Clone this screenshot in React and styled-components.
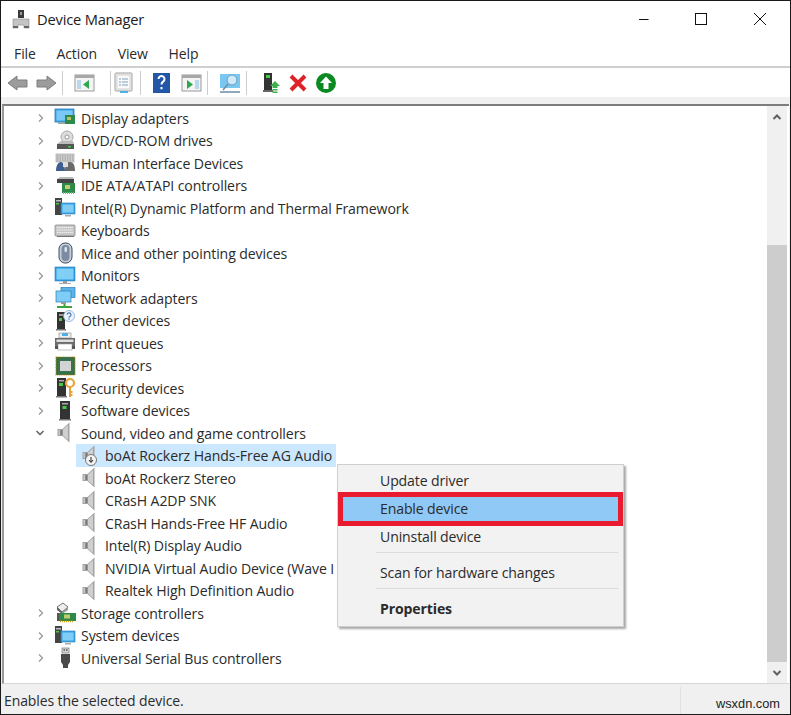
import React from 'react';
import styled, { createGlobalStyle } from 'styled-components';

const Global = createGlobalStyle`
  html, body { margin: 0; padding: 0; background: #1a1a1a; overflow: hidden; }
  * { box-sizing: border-box; }
`;
const Window = styled.div`
  width: 789px; height: 713px; margin: 1px 0 0 1px; background: #f0f0f0;
  display: flex; flex-direction: column; position: relative;
  font-family: "Open Sans", "Noto Sans", sans-serif; color: #222; overflow: hidden;
`;
const TitleBar = styled.div`
  height: 33px; background: #fff; display: flex; align-items: center; padding: 3px 0 0 11px; flex: none;
`;
const TitleText = styled.div`font-size: 14.7px; letter-spacing: -.2px; margin-left: 7px; flex: 1; color: #1c1c1c;`;
const WinBtn = styled.svg`width: 14px; height: 14px; flex: none; margin-right: ${p => p.$mr}px;`;
const MenuBar = styled.div`
  height: 34px; background: #fff; border-bottom: 2px solid #cfcfcf; display: flex; align-items: center;
  padding: 6px 0 0 13px; gap: 20.7px; font-size: 14px; flex: none; color: #2a2a2a;
`;
const MenuItem = styled.div`letter-spacing: -.1px;`;
const Toolbar = styled.div`
  height: 29px; background: #fff; display: flex; align-items: center; padding-left: 6px; flex: none;
`;
const ToolIcon = styled.svg`width: ${p => p.$w}px; height: 22px; flex: none; margin-left: ${p => p.$ml || 0}px;`;
const ToolSep = styled.div`width: 1px; height: 24px; background: #cdcdcd; flex: none; margin-left: ${p => p.$ml}px;`;
const Strip = styled.div`height: 7px; background: #f0f0f0; flex: none;`;
const Panel = styled.div`
  flex: 1; margin-left: 1px; margin-right: 1px; background: #fff; display: flex; min-height: 0;
  border-top: 2px solid #7d7d7d; border-left: 2px solid #9a9a9a; border-bottom: 1px solid #d6d6d6;
`;
const Tree = styled.div`flex: 1; padding-top: .75px; min-width: 0; overflow: hidden;`;
const Row = styled.div`height: 22.5px; display: flex; align-items: center; position: relative;
  padding-left: ${p => p.$child ? 72 : 0}px;`;
const Chevron = styled.svg`width: ${p => p.$w || 8}px; height: 10px; margin-left: ${p => p.$ml || 33}px; flex: none;`;
const DevIcon = styled.svg`width: 22px; height: 22px; flex: none; margin-left: 9px;`;
const RowText = styled.div`font-size: 14.1px; letter-spacing: -.1px; margin-left: 5px; white-space: nowrap; color: #2b2b2b;`;
const ChildCell = styled.div`
  display: flex; align-items: center; height: 23px; padding: 0 4px 0 3px; min-width: 0;
  background: ${p => p.$sel ? '#cce8ff' : 'transparent'};
`;
const ChildIcon = styled.svg`width: 20px; height: 22px; flex: none;`;
const ChildText = styled.div`
  font-size: 14.1px; letter-spacing: -.1px; margin-left: 6px; white-space: nowrap; color: #2b2b2b;
`;
const Scrollbar = styled.div`width: 20px; margin-right: 2px; background: #f0f0f0; display: flex; flex-direction: column; flex: none;`;
const Arrow = styled.div`height: ${p => p.$h}px; display: flex; align-items: center; justify-content: center; flex: none;`;
const Track = styled.div`flex: 1; display: flex; flex-direction: column; justify-content: flex-end;`;
const Thumb = styled.div`height: 417px; background: #cdcdcd;`;
const Status = styled.div`
  height: 30px; background: #f0f0f0; display: flex; align-items: center; flex: none; position: relative;
  font-size: 14px; letter-spacing: -.1px; padding: 3px 0 0 3px; color: #2b2b2b;
`;
const StatusCell = styled.div`width: 677px; height: 100%; display: flex; align-items: center; border-right: 1px solid #e0e0e0;`;
const Watermark = styled.div`
  position: absolute; right: 10px; top: 12px; font-family: "Liberation Sans", sans-serif; font-size: 12.8px; letter-spacing: 0; color: #222;
`;
const ContextMenu = styled.div`
  position: absolute; left: 336px; top: 463px; width: 287px; height: 163px; background: #f2f2f2;
  border: 1px solid #cfcfcf; box-shadow: 2px 2px 2px rgba(0,0,0,.35); display: flex; flex-direction: column;
  padding-top: 3px; font-size: 14.1px; letter-spacing: -.14px; color: #2b2b2b;
`;
const CtxItem = styled.div`
  height: ${p => p.$h}px; display: flex; align-items: center; padding: ${p => p.$pt || 0}px 0 ${p => p.$pb || 0}px 42px;
  font-weight: ${p => p.$bold ? 700 : 400}; flex: none;
`;
const CtxActive = styled.div`
  height: 34px; flex: none; display: flex; align-items: center; padding: 0 0 2px 37px;
  background: #90c8f6; border: 5px solid #e81c2e;
`;
const CtxSep = styled.div`height: 1px; background: #dcdcdc; margin-left: 38px; margin-right: 5px; flex: none;`;

const Chev = () => <Chevron viewBox="0 0 8 10"><path d="M2 1.5 L5.5 5 L2 8.5" fill="none" stroke="#9a9a9a" strokeWidth="1.3"/></Chevron>;
const ChevDown = () => <Chevron $w={10} $ml={31} viewBox="0 0 10 10"><path d="M1.5 3 L5 6.5 L8.5 3" fill="none" stroke="#555" strokeWidth="1.3"/></Chevron>;

const speaker = <>
  <path d="M3.5 7 h5 l7-6.5 v20 l-7-6.5 h-5z" fill="#a2a2a2"/>
  <path d="M9 7.5 l5-4.5 v15 l-5-4.5z" fill="#cfcfcf"/>
  <rect x="4.5" y="8" width="1.5" height="5" fill="#c6c6c6"/>
  <rect x="6.5" y="8" width="1.8" height="5" fill="#7a7a7a"/>
</>;

const icons = {
  display: <><rect x="1" y="2" width="19" height="13" fill="#3aa6e8" stroke="#2279b6" strokeWidth=".8"/><rect x="2.5" y="3.5" width="16" height="10" fill="#7cc8f5"/><rect x="11" y="8" width="10" height="9" fill="#2f8a4a"/><rect x="13" y="10" width="4" height="3" fill="#b9c46c"/><rect x="4" y="15" width="7" height="2" fill="#9aa"/></>,
  dvd: <><ellipse cx="13" cy="7" rx="6" ry="6" fill="#dcdcdc" stroke="#a9a9a9"/><circle cx="13" cy="7" r="2" fill="#fff" stroke="#999"/><path d="M3 14 L7 11 H19 L20 14z" fill="#bbb"/><rect x="3" y="14" width="17" height="5" fill="#555"/><rect x="14" y="16" width="3" height="1.5" fill="#4c4"/></>,
  hid: <><rect x="2" y="2" width="18" height="8" fill="#cfcfcf" stroke="#999" strokeWidth=".6"/><path d="M3 4h16M3 6h16M3 8h16" stroke="#8e8e8e" strokeDasharray="1.5 1" strokeWidth=".8"/><path d="M2 19 C2 12 5 10 7 10 C9 10 11 14 11 19z" fill="#3d5f8f"/><path d="M11 19 C11 12 13 10 16 10 C19 10 21 13 21 19z" fill="#6a6a6a"/><rect x="9" y="11" width="5" height="4" fill="#ddd"/></>,
  ide: <><path d="M3 4 L6 2 H19 L20 4z" fill="#bbb"/><rect x="3" y="4" width="17" height="4" fill="#444"/><rect x="8" y="8" width="13" height="10" fill="#2f8a4a"/><rect x="11" y="10" width="5" height="4" fill="#bfcc70"/><path d="M9 18h11" stroke="#d4a017" strokeWidth="2" strokeDasharray="1 1"/></>,
  system: <><rect x="1" y="1" width="7" height="17" fill="#444"/><rect x="2" y="3" width="5" height="1.5" fill="#bbb"/><rect x="2" y="6" width="3" height="1.5" fill="#4c4"/><rect x="7" y="6" width="14" height="11" fill="#39a3e6" stroke="#2a7fb8" strokeWidth=".6"/><rect x="8.5" y="7.5" width="11" height="8" fill="#7fcdf6"/><rect x="11" y="18" width="6" height="1.5" fill="#aaa"/></>,
  keyboard: <><rect x="1" y="5" width="20" height="11" rx="1" fill="#c8c8c8" stroke="#7b7b7b" strokeWidth=".7"/><path d="M3 7.5h16M3 10h16M3 12.5h16" stroke="#f1f1f1" strokeWidth="1.1" strokeDasharray="1.5 .7"/><rect x="3" y="16" width="17" height="1" fill="#777"/></>,
  mouse: <><rect x="5" y="1" width="13" height="20" rx="6" fill="#c4cedb" stroke="#3e4a5c" strokeWidth="1"/><rect x="7.5" y="3" width="8" height="16" rx="4" fill="#7c8ba0"/><rect x="10.5" y="5" width="2.5" height="5" rx="1" fill="#dce3ea"/></>,
  monitor: <><rect x="1" y="2" width="20" height="14" fill="#2f9be0" stroke="#2a7fb8" strokeWidth=".6"/><rect x="2.5" y="3.5" width="17" height="11" fill="#80cff7"/><rect x="9" y="16" width="4" height="2" fill="#999"/><rect x="5" y="18" width="12" height="1" fill="#aaa"/></>,
  network: <><rect x="7" y="0.5" width="14" height="10" fill="#5ab4ea" stroke="#2a7fb8" strokeWidth=".7"/><rect x="2" y="4" width="15" height="11" fill="#7fcdf6" stroke="#2a7fb8" strokeWidth=".7"/><rect x="7" y="15" width="5" height="2" fill="#999"/><path d="M3 20h15M10.5 17v3" stroke="#3da53d" strokeWidth="2"/></>,
  other: <><rect x="3" y="2" width="8" height="17" fill="#333"/><rect x="5" y="4" width="4" height="2" fill="#999"/><rect x="5" y="8" width="3" height="3" fill="#4c4"/><rect x="2" y="19" width="10" height="1.5" fill="#777"/><circle cx="15" cy="6" r="5.5" fill="#eef4fb" stroke="#88a8cc" strokeWidth=".8"/><path d="M13.2 4.6 a1.9 1.9 0 1 1 2.6 1.9 q-.8 .4 -.8 1.3 M15 8.6 v1.1" fill="none" stroke="#3a6fb0" strokeWidth="1.1"/></>,
  print: <><rect x="5" y="1" width="12" height="5" fill="#eee" stroke="#888" strokeWidth=".6"/><rect x="8" y="1" width="6" height="3" fill="#4fb0e5"/><rect x="1" y="6" width="20" height="8" fill="#6a6a6a"/><rect x="2.5" y="7.5" width="17" height="2.5" fill="#dfdfdf"/><rect x="4" y="12" width="14" height="6" fill="#fff" stroke="#999" strokeWidth=".6"/><rect x="1" y="14" width="3" height="3" fill="#555"/><rect x="18" y="14" width="3" height="3" fill="#555"/></>,
  cpu: <><rect x="2" y="2" width="19" height="18" fill="#2f6b45" stroke="#b38a1a" strokeWidth="1.2" strokeDasharray="1 .8"/><rect x="3.5" y="3.5" width="16" height="15" fill="#39724e"/><rect x="6" y="6" width="11" height="10" fill="#d3d3d3"/></>,
  security: <><rect x="3" y="1" width="9" height="18" fill="#333"/><rect x="5" y="3" width="5" height="1.5" fill="#aaa"/><rect x="5" y="6" width="4" height="3" fill="#4c4"/><rect x="2" y="19" width="11" height="1.5" fill="#777"/><circle cx="16" cy="6" r="4" fill="none" stroke="#e8a33a" strokeWidth="2.2"/><path d="M16 9v11M16 15h2.5M16 18h2.5" stroke="#e8a33a" strokeWidth="2"/></>,
  software: <><rect x="6" y="1" width="10" height="18" fill="#333"/><rect x="8" y="3" width="6" height="1.5" fill="#aaa"/><rect x="8.5" y="6" width="4" height="3" fill="#4c4"/><rect x="5" y="19" width="12" height="1.5" fill="#777"/></>,
  storage: <><path d="M3 5 L9 1 L14 5 L8 10z" fill="#eee" stroke="#555" strokeWidth=".8"/><path d="M3 5 v3 l5 4 v-2.5z" fill="#666"/><path d="M8 12 L14 8 V5 L8 10z" fill="#999"/><rect x="4" y="11" width="18" height="8" fill="#2f8a4a"/><rect x="10" y="12.5" width="6" height="4" fill="#bfcc70"/><path d="M6 19.5h14" stroke="#d4a017" strokeWidth="1.6" strokeDasharray="1 1"/><rect x="3" y="11" width="2" height="8" fill="#555"/></>,
  usb: <><rect x="8" y="1" width="7" height="5" fill="#d8d8d8" stroke="#777" strokeWidth=".7"/><rect x="9.5" y="2.3" width="1.5" height="1.5" fill="#555"/><rect x="12" y="2.3" width="1.5" height="1.5" fill="#555"/><path d="M7 7 H16 V15 L14 18 V21 H9 V18 L7 15z" fill="#4a4a4a"/></>,
};

const topRows = [
  ['display', 'Display adapters'], ['dvd', 'DVD/CD-ROM drives'], ['hid', 'Human Interface Devices'],
  ['ide', 'IDE ATA/ATAPI controllers'], ['system', 'Intel(R) Dynamic Platform and Thermal Framework'],
  ['keyboard', 'Keyboards'], ['mouse', 'Mice and other pointing devices'], ['monitor', 'Monitors'],
  ['network', 'Network adapters'], ['other', 'Other devices'], ['print', 'Print queues'], ['cpu', 'Processors'],
  ['security', 'Security devices'], ['software', 'Software devices'],
];
const children = ['boAt Rockerz Stereo', 'CRasH A2DP SNK', 'CRasH Hands-Free HF Audio', 'Intel(R) Display Audio', 'NVIDIA Virtual Audio Device (Wave I', 'Realtek High Definition Audio'];
const bottomRows = [['storage', 'Storage controllers'], ['system', 'System devices'], ['usb', 'Universal Serial Bus controllers']];

const TreeRow = ({ icon, label }) => (
  <Row><Chev /><DevIcon viewBox="0 0 22 22">{icons[icon]}</DevIcon><RowText>{label}</RowText></Row>
);

export default function App() {
  return (
    <Window>
      <Global />
      <TitleBar>
        <svg width="18" height="20" viewBox="0 0 18 20">
          <rect x="6" y="1" width="6" height="8" fill="#3a3a3a"/><rect x="8" y="3" width="2" height="3" fill="#999"/>
          <path d="M1 10 H17 V19 H12 V16 H6 V19 H1z" fill="#c4c4c4" stroke="#8a8a8a" strokeWidth=".6"/>
          <rect x="1" y="17" width="5" height="2" fill="#666"/><rect x="12" y="17" width="5" height="2" fill="#666"/>
        </svg>
        <TitleText>Device Manager</TitleText>
        <WinBtn $mr={45} viewBox="0 0 14 14"><path d="M4 7.5h9.5" stroke="#111" strokeWidth="1"/></WinBtn>
        <WinBtn $mr={45} viewBox="0 0 14 14"><rect x="1.5" y="1.5" width="11" height="11" fill="none" stroke="#111"/></WinBtn>
        <WinBtn $mr={23} viewBox="0 0 14 14"><path d="M1 1l12 12M13 1L1 13" stroke="#111" strokeWidth="1"/></WinBtn>
      </TitleBar>
      <MenuBar>
        <MenuItem>File</MenuItem><MenuItem>Action</MenuItem><MenuItem>View</MenuItem><MenuItem>Help</MenuItem>
      </MenuBar>
      <Toolbar>
        <ToolIcon $w={21} viewBox="0 0 21 22"><path d="M1 11 L10 4 V8 H20 V15 H10 V18z" fill="#9c9c9c" stroke="#7e7e7e"/></ToolIcon>
        <ToolIcon $w={21} $ml={8} viewBox="0 0 21 22"><path d="M20 11 L11 4 V8 H1 V15 H11 V18z" fill="#9c9c9c" stroke="#7e7e7e"/></ToolIcon>
        <ToolSep $ml={5} />
        <ToolIcon $w={21} $ml={11} viewBox="0 0 21 22"><rect x="1" y="3" width="19" height="16" fill="#f4f4f4" stroke="#9a9a9a"/><rect x="1" y="3" width="19" height="3" fill="#a8a8a8"/><rect x="3" y="8" width="4" height="9" fill="#b8d8ee"/><path d="M15 8 L9 12.5 L15 17z" fill="#2da84f"/></ToolIcon>
        <ToolSep $ml={15} />
        <ToolIcon $w={20} $ml={3} viewBox="0 0 20 22"><rect x="1" y="1" width="17" height="18" rx="1" fill="#f0f0f0" stroke="#a0a0a0"/><rect x="3" y="3" width="13" height="14" fill="#fafafa" stroke="#bbb" strokeWidth=".6"/><path d="M5 7h2M8 7h6M5 10h2M8 10h6M5 13h2M8 13h6" stroke="#7d9dbb"/><rect x="6" y="19" width="8" height="2" fill="#4fb0e5"/></ToolIcon>
        <ToolSep $ml={6} />
        <ToolIcon $w={17} $ml={12} viewBox="0 0 17 22"><rect x="0" y="1" width="17" height="20" fill="#2456a8"/><path d="M5.5 7 a3 3 0 1 1 4.6 2.6 q-1.6 1 -1.6 3 M8.5 15 v2.2" fill="none" stroke="#fff" strokeWidth="2"/></ToolIcon>
        <ToolIcon $w={21} $ml={11} viewBox="0 0 21 22"><rect x="1" y="3" width="19" height="16" fill="#f4f4f4" stroke="#9a9a9a"/><rect x="1" y="3" width="19" height="3" fill="#a8a8a8"/><path d="M6 8 L12 12.5 L6 17z" fill="#2da84f"/><rect x="14" y="8" width="4" height="9" fill="#b8d8ee"/></ToolIcon>
        <ToolSep $ml={5} />
        <ToolIcon $w={22} $ml={11} viewBox="0 0 22 22"><rect x="1" y="2" width="20" height="14" fill="#79c8f2"/><circle cx="13" cy="8" r="5" fill="#cfe9f8" stroke="#6b9cbc"/><path d="M9 12 L4 18 M1 20 H21" stroke="#6f8ca3" strokeWidth="1.5"/></ToolIcon>
        <ToolSep $ml={5} />
        <ToolIcon $w={18} $ml={15} viewBox="0 0 18 22"><rect x="2" y="1" width="8" height="17" fill="#333"/><rect x="4" y="3" width="4" height="3" fill="#4c4"/><rect x="1" y="18" width="10" height="2" fill="#666"/><path d="M13 9 L18 14 H15.5 V16 H10.5 V14 H8z" fill="#3cb04a"/><rect x="10.5" y="17" width="5" height="1.5" fill="#3cb04a"/><rect x="10.5" y="19.5" width="5" height="1.5" fill="#3cb04a"/></ToolIcon>
        <ToolIcon $w={18} $ml={9} viewBox="0 0 18 18"><path d="M2 2 L16 16 M16 2 L2 16" stroke="#df2128" strokeWidth="4"/></ToolIcon>
        <ToolIcon $w={20} $ml={9} viewBox="0 0 20 20"><circle cx="10" cy="10" r="10" fill="#0b8a22"/><path d="M10 3.5 L16 10 H12.5 V16 H7.5 V10 H4z" fill="#fff"/></ToolIcon>
      </Toolbar>
      <Strip />
      <Panel>
        <Tree>
          {topRows.map(([i, l]) => <TreeRow key={l} icon={i} label={l} />)}
          <Row><ChevDown /><DevIcon viewBox="0 0 22 22">{speaker}</DevIcon><RowText>Sound, video and game controllers</RowText></Row>
          <Row $child>
            <ChildCell $sel>
              <ChildIcon viewBox="0 0 20 22">{speaker}<circle cx="12" cy="15" r="5.5" fill="#f4f4f4" stroke="#777"/><path d="M12 12v5M10 15l2 2.5 2-2.5" stroke="#222" fill="none"/></ChildIcon>
              <ChildText>boAt Rockerz Hands-Free AG Audio</ChildText>
            </ChildCell>
          </Row>
          {children.map(c => (
            <Row $child key={c}><ChildCell><ChildIcon viewBox="0 0 20 22">{speaker}</ChildIcon><ChildText>{c}</ChildText></ChildCell></Row>
          ))}
          {bottomRows.map(([i, l]) => <TreeRow key={l} icon={i} label={l} />)}
        </Tree>
        <Scrollbar>
          <Arrow $h={22}><svg width="10" height="8" viewBox="0 0 10 8"><path d="M1.5 6 L5 2.5 L8.5 6" fill="none" stroke="#606060" strokeWidth="2"/></svg></Arrow>
          <Track><Thumb /></Track>
          <Arrow $h={21}><svg width="10" height="8" viewBox="0 0 10 8"><path d="M1.5 2 L5 5.5 L8.5 2" fill="none" stroke="#606060" strokeWidth="2"/></svg></Arrow>
        </Scrollbar>
      </Panel>
      <Status>
        <StatusCell>Enables the selected device.</StatusCell>
        <Watermark>wsxdn.com</Watermark>
      </Status>
      <ContextMenu>
        <CtxItem $h={24}>Update driver</CtxItem>
        <CtxActive>Enable device</CtxActive>
        <CtxItem $h={26} $pb={6}>Uninstall device</CtxItem>
        <CtxSep />
        <CtxItem $h={35} $pt={3}>Scan for hardware changes</CtxItem>
        <CtxSep />
        <CtxItem $h={36} $pt={2} $bold>Properties</CtxItem>
      </ContextMenu>
    </Window>
  );
}
